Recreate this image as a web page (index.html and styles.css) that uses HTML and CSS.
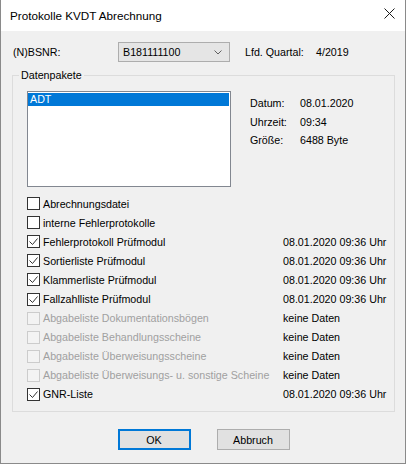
FILE: index.html
```html
<!DOCTYPE html>
<html lang="de">
  <head>
    <meta charset="UTF-8">
    <title>Protokolle KVDT Abrechnung</title>
    <link rel="stylesheet" href="styles.css">
  </head>
<body>
  <div class="window">
    <div class="titlebar">
      <span class="title">Protokolle KVDT Abrechnung</span>
      <svg class="close" width="11" height="11" viewBox="0 0 11 11">
        <path d="M0.5 0.5 L10.5 10.5 M10.5 0.5 L0.5 10.5" stroke="#1a1a1a" stroke-width="1" fill="none"/>
      </svg>
    </div>

    <div class="content">
      <div class="top-row">
        <span class="bsnr-label">(N)BSNR:</span>
        <div class="combo">
          <span>B181111100</span>
          <svg width="8" height="5" viewBox="0 0 8 5">
            <path d="M0.5 0.5 L4 4 L7.5 0.5" stroke="#606060" stroke-width="1" fill="none"/>
          </svg>
        </div>
        <span class="quartal-label">Lfd. Quartal:</span>
        <span>4/2019</span>
      </div>

      <fieldset class="group">
        <legend>Datenpakete</legend>
        <div class="group-body">
          <div class="packets">
            <div class="listbox">
              <div class="list-item selected">ADT</div>
            </div>
            <div class="info">
              <div class="info-row"><span class="info-label">Datum:</span><span>08.01.2020</span></div>
              <div class="info-row"><span class="info-label">Uhrzeit:</span><span>09:34</span></div>
              <div class="info-row"><span class="info-label">Größe:</span><span>6488 Byte</span></div>
            </div>
          </div>

          <div class="checks">
            <div class="check-row">
              <label class="check"><span class="box"></span>Abrechnungsdatei</label>
              <span></span>
            </div>
            <div class="check-row">
              <label class="check"><span class="box"></span>interne Fehlerprotokolle</label>
              <span></span>
            </div>
            <div class="check-row">
              <label class="check"><span class="box checked"></span>Fehlerprotokoll Prüfmodul</label>
              <span>08.01.2020 09:36 Uhr</span>
            </div>
            <div class="check-row">
              <label class="check"><span class="box checked"></span>Sortierliste Prüfmodul</label>
              <span>08.01.2020 09:36 Uhr</span>
            </div>
            <div class="check-row">
              <label class="check"><span class="box checked"></span>Klammerliste Prüfmodul</label>
              <span>08.01.2020 09:36 Uhr</span>
            </div>
            <div class="check-row">
              <label class="check"><span class="box checked"></span>Fallzahlliste Prüfmodul</label>
              <span>08.01.2020 09:36 Uhr</span>
            </div>
            <div class="check-row">
              <label class="check disabled"><span class="box"></span>Abgabeliste Dokumentationsbögen</label>
              <span>keine Daten</span>
            </div>
            <div class="check-row">
              <label class="check disabled"><span class="box"></span>Abgabeliste Behandlungsscheine</label>
              <span>keine Daten</span>
            </div>
            <div class="check-row">
              <label class="check disabled"><span class="box"></span>Abgabeliste Überweisungsscheine</label>
              <span>keine Daten</span>
            </div>
            <div class="check-row">
              <label class="check disabled"><span class="box"></span>Abgabeliste Überweisungs- u. sonstige Scheine</label>
              <span>keine Daten</span>
            </div>
            <div class="check-row">
              <label class="check"><span class="box checked"></span>GNR-Liste</label>
              <span>08.01.2020 09:36 Uhr</span>
            </div>
          </div>
        </div>
      </fieldset>

      <div class="buttons">
        <button class="btn default">OK</button>
        <button class="btn">Abbruch</button>
      </div>
    </div>
  </div>
</body>
</html>
```

FILE: styles.css
```css
/* whole page */
body {
  margin: 0;
  font-family: "Liberation Sans", Arial, sans-serif;
  font-size: 10.7px;
  color: #000;
  background-color: #f0f0f0;
}

/* dialog frame */
.window {
  width: 406px;
  height: 464px;
  box-sizing: border-box;
  border: 1px solid #8a8a8a;
  border-top: none;
  background-color: #f0f0f0;
}

/* title bar */
.titlebar {
  height: 28px;
  padding: 3px 0 0 9px;
  background-color: #fff;
  display: flex;
  align-items: center;
  justify-content: space-between;
}

.title {
  font-size: 11.7px;
  line-height: 28px;
  margin-top: -2px;
}

.close {
  margin-right: 10px;
  margin-top: -7px;
}

/* dialog body */
.content {
  padding: 11px 10px 0 11px;
}

.top-row {
  display: flex;
  align-items: center;
  height: 20px;
}

.bsnr-label {
  width: 105px;
  padding-left: 1px;
}

.combo {
  height: 18px;
  width: 99px;
  border: 1px solid #adadad;
  background-color: #e5e5e5;
  display: flex;
  align-items: center;
  justify-content: space-between;
  padding: 0 7px 0 4px;
}

.quartal-label {
  margin-left: 15px;
  width: 71px;
}

/* group box */
.group {
  margin: 7px 0 0 0;
  padding: 0;
  border: 1px solid #dcdcdc;
  height: 343px;
  box-sizing: border-box;
}

.group legend {
  margin-left: 6px;
  padding: 0 2px;
  line-height: 13px;
}

.group-body {
  padding: 9px 0 0 14px;
}

.packets {
  display: flex;
  align-items: flex-start;
}

.listbox {
  width: 202px;
  height: 93px;
  border: 1px solid #828790;
  background-color: #fff;
  padding-top: 1px;
}

.list-item {
  height: 13px;
  line-height: 13px;
  padding-left: 2px;
  margin-right: 1px;
}

.list-item.selected {
  background-color: #0078d7;
  color: #fff;
}

.info {
  margin-left: 19px;
  margin-top: 3px;
}

.info-row {
  height: 18.7px;
  line-height: 18.7px;
  display: flex;
}

.info-label {
  width: 50px;
}

/* check boxes */
.checks {
  margin-top: 7px;
}

.check-row {
  display: grid;
  grid-template-columns: 256px auto;
  height: 19.1px;
  align-items: center;
}

.check {
  display: flex;
  align-items: center;
  white-space: nowrap;
}

.box {
  width: 11px;
  height: 11px;
  border: 1px solid #333;
  background-color: #fff;
  margin-right: 3px;
}

.box.checked {
  background-image: url("data:image/svg+xml,%3Csvg xmlns='http://www.w3.org/2000/svg' width='11' height='11'%3E%3Cpath d='M1.5 5.5 L4.5 8.5 L9.5 2.5' stroke='%23333' stroke-width='1' fill='none'/%3E%3C/svg%3E");
}

.check.disabled {
  color: #a0a0a0;
}

.check.disabled .box {
  border-color: #cccccc;
  background-color: #f3f3f3;
}

/* buttons */
.buttons {
  display: flex;
  justify-content: center;
  gap: 26px;
  margin-top: 17px;
}

.btn {
  width: 73px;
  height: 21px;
  font-family: "Liberation Sans", Arial, sans-serif;
  font-size: 10.7px;
  color: #000;
  background-color: #e1e1e1;
  border: 1px solid #adadad;
  padding: 0;
}

.btn.default {
  border: 2px solid #0078d7;
}
```
